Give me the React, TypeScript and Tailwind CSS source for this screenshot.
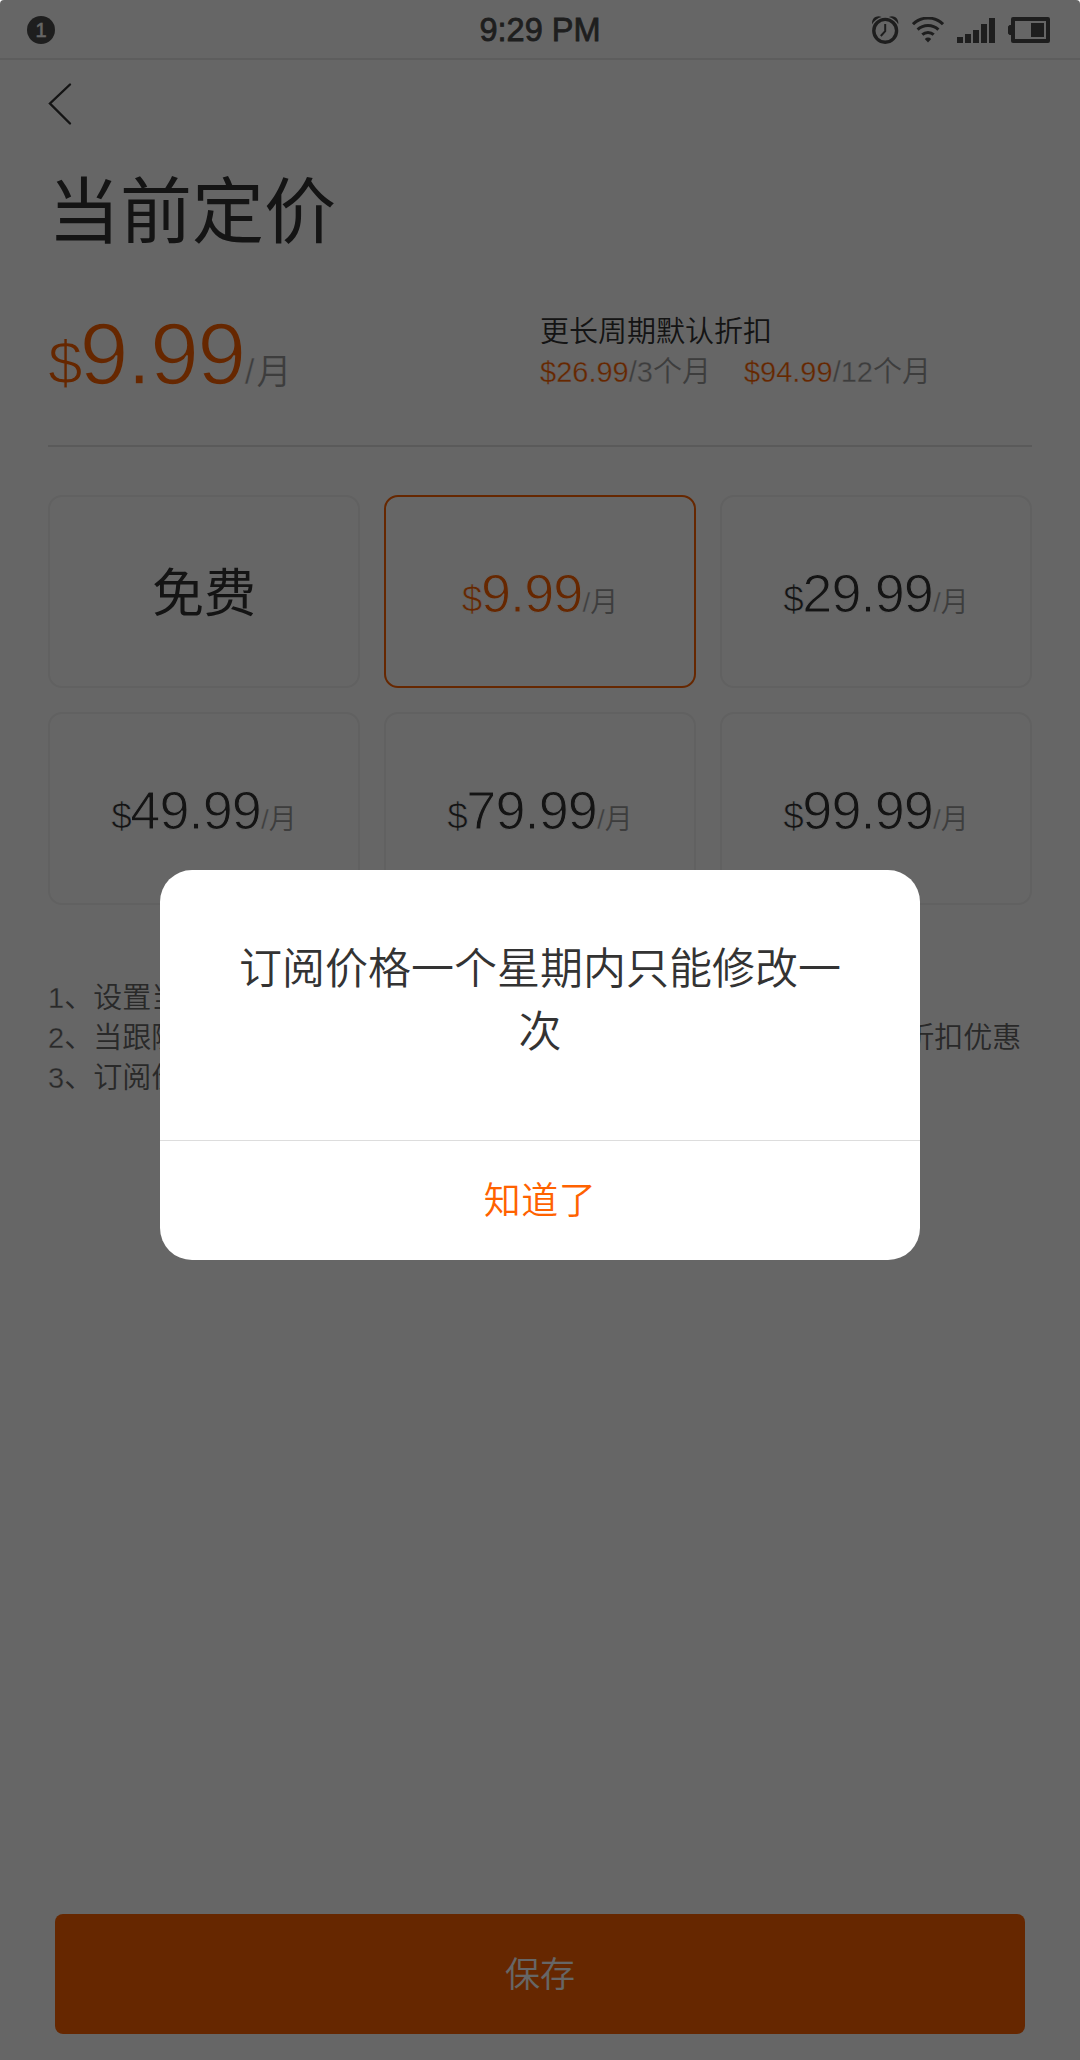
import React from 'react';
import clsx from 'clsx';

type Plan = { id: number; price?: string };

const plans: Plan[] = [
  { id: 0 },
  { id: 1, price: '9.99' },
  { id: 2, price: '29.99' },
  { id: 3, price: '49.99' },
  { id: 4, price: '79.99' },
  { id: 5, price: '99.99' },
];

const terms = [
  { price: '$26.99', months: 3 },
  { price: '$94.99', months: 12 },
];

const notes = [
  '设置当前定价后立即生效',
  '当跟随者选择更长的订阅周期时，将按照默认的比例享受对应的折扣优惠',
  '订阅价格一个星期内只能修改一次',
];

function StatusBar() {
  return (
    <div className="grid h-[60px] grid-cols-3 items-center border-b-2 border-[#e8e8e8] px-[27px] pt-[2px] text-[#4d4d4d]">
      <div className="flex h-7 w-7 items-center justify-center rounded-full bg-[#4d4d4d] text-[20px] leading-none text-white [-webkit-text-stroke:0.5px_white]">
        1
      </div>
      <div className="pt-px text-center text-[32.5px] leading-none [-webkit-text-stroke:0.8px_#4d4d4d]">9:29 PM</div>
      <div className="flex items-center justify-end gap-[13px] pr-[3px]">
        <svg width="27" height="28" viewBox="0 0 27 28" fill="none" stroke="currentColor">
          <circle cx="13.2" cy="14.8" r="11.4" strokeWidth="3.4" />
          <path d="M13.2 8v7.2l-4.4 4.8" strokeWidth="2" />
          <path d="M0.2 8.200C-0.800 2.500 4.500-1.500 9.600 0.900A15 15 0 0 0 0.200 8.200ZM26.200 8.200C27.200 2.500 22-1.500 16.800 0.900A15 15 0 0 1 26.200 8.200Z" fill="currentColor" stroke="none" />
        </svg>
        <svg width="32" height="26" viewBox="0 0 32 26" fill="none" stroke="currentColor" strokeWidth="3">
          <path d="M1 7.200a21.500 21.500 0 0 1 30 0" />
          <path d="M5.600 12.600a15 15 0 0 1 20.800 0" />
          <path d="M10.300 17.700a8.300 8.300 0 0 1 11.400 0" />
          <path d="M16 25.600l-3.200-3.700a4.600 4.600 0 0 1 6.400 0Z" fill="currentColor" stroke="none" />
        </svg>
        <svg width="38" height="25" viewBox="0 0 38 25" fill="currentColor">
          <path d="M0 19h6v6H0zM8 16h6v9H8zM16 12h6v13h-6zM24 6h6v19h-6zM32 0h6v25h-6z" />
        </svg>
        <svg width="42" height="26" viewBox="0 0 42 26" fill="currentColor">
          <rect x="5" y="2" width="35" height="22" fill="none" stroke="currentColor" strokeWidth="4" strokeLinejoin="round" />
          <path d="M3 8H1.500L0 9.500v7L1.500 18H3zM23 6h13v14H23z" />
        </svg>
      </div>
    </div>
  );
}

function PlanCard({ plan, active }: { plan: Plan; active: boolean }) {
  return (
    <button
      className={clsx(
        'flex h-[193px] justify-center rounded-[14px] border-2',
        active ? 'border-[#ff6200] text-[#ff6200]' : 'border-[#f2f2f2] text-[#333]',
      )}
    >
      {plan.price ? (
        <span className="flex items-baseline pt-[60px] leading-[72px]">
          <span className="text-[37px] tracking-[-1.500px] [-webkit-text-stroke:0.7px_white]">$</span>
          <span className="text-[54px] tracking-[-0.900px] [-webkit-text-stroke:1px_white]">{plan.price}</span>
          <span className="text-[28px] text-[#999]"><span className="[-webkit-text-stroke:0.4px_white]">/</span>月</span>
        </span>
      ) : (
        <span className="pt-[61px] text-[52px] leading-[72px] font-normal">免费</span>
      )}
    </button>
  );
}

function Dialog() {
  return (
    <div className="absolute inset-0 flex items-start justify-center bg-black/60 pt-[870px]">
      <div className="flex h-[390px] w-[760px] flex-col overflow-hidden rounded-[32px] bg-white">
        <p className="flex-1 px-[78px] pt-[68px] text-center text-[43px] leading-[63px] text-[#333]">
          订阅价格一个星期内只能修改一次
        </p>
        <button className="h-[120px] border-t border-[#ddd] pt-[3px] text-[37px] tracking-[0.500px] text-[#ff6200]">知道了</button>
      </div>
    </div>
  );
}

export default function App() {
  const [selected] = React.useState(1);

  return (
    <div className="relative flex h-[2060px] w-[1080px] flex-col overflow-hidden rounded-t-[4px] bg-white font-['Liberation_Sans','Noto_Sans_CJK_SC',sans-serif] font-[350]">
      <StatusBar />

      <div className="flex flex-1 flex-col px-12">
        <svg className="mt-[22px]" width="24" height="44" viewBox="0 0 24 44" fill="none" stroke="#333" strokeWidth="2.4" strokeLinecap="round">
          <path d="M22 2.500L2 21.500l20 20" />
        </svg>

        <h1 className="mt-[34px] text-[72px] leading-[104px] font-normal text-[#333]">当前定价</h1>

        <div className="mt-[47px] grid h-[136px] grid-cols-[492px_1fr] border-b-2 border-[#e0e0e0]">
          <div className="flex items-baseline leading-[86px] text-[#ff6200]">
            <span className="text-[62px] tracking-[-3px] [-webkit-text-stroke:1.2px_white]">$</span>
            <span className="text-[88px] tracking-[-1.500px] [-webkit-text-stroke:1.600px_white]">9.99</span>
            <span className="text-[35px] text-[#999]"><span className="tracking-[2px] [-webkit-text-stroke:0.500px_white]">/</span>月</span>
          </div>
          <div className="pt-px text-[29px] leading-10 text-[#999]">
            <div className="text-[#333]">更长周期默认折扣</div>
            <div className="flex gap-[33px]">
              {terms.map(t => (
                <span key={t.months}>
                  <span className="[-webkit-text-stroke:0.3px_white]"><span className="text-[#ff6200]">{t.price}</span>/{t.months}</span>个月
                </span>
              ))}
            </div>
          </div>
        </div>

        <div className="mt-12 grid grid-cols-3 gap-6">
          {plans.map(p => <PlanCard key={p.id} plan={p} active={p.id === selected} />)}
        </div>

        <ol className="mt-[73px] text-[29px] leading-10 whitespace-nowrap text-[#666]">
          {notes.map((n, idx) => (
            <li key={n}><span className="[-webkit-text-stroke:0.3px_white]">{idx + 1}</span>、{n}</li>
          ))}
        </ol>
      </div>

      <button className="mx-[55px] mb-[26px] h-[120px] rounded-lg bg-[#ff6200] pt-[3px] text-[35px] text-white">保存</button>

      <Dialog />
    </div>
  );
}
